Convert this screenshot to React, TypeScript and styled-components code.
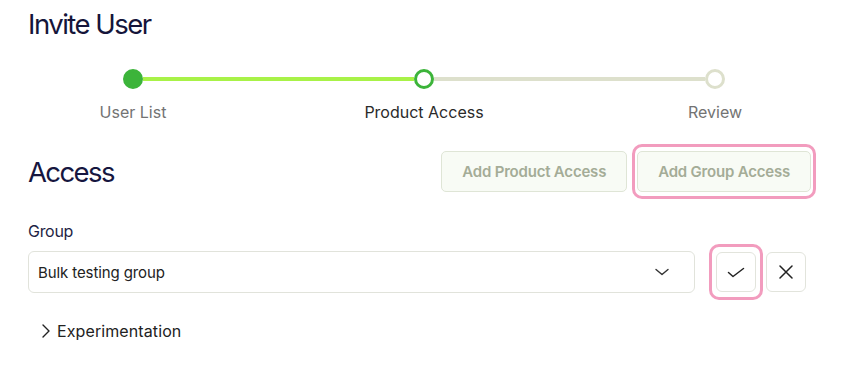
import React from "react";
import styled, { createGlobalStyle } from "styled-components";

const GlobalStyle = createGlobalStyle`
  html, body {
    margin: 0;
    padding: 0;
    background: #ffffff;
    font-family: Inter, "Noto Sans", "Liberation Sans", sans-serif;
  }
  * { box-sizing: border-box; }
`;

const Page = styled.div`
  padding: 7px 0 0 28px;
  width: 811px;
`;

const Title = styled.h1`
  margin: 0;
  font-size: 27.5px;
  line-height: 34px;
  font-weight: 400;
  letter-spacing: -1.5px;
  color: #15153a;
`;

const Track = styled.div`
  display: flex;
  align-items: center;
  margin-top: 28px;
  padding-left: 95px;
  height: 20px;
`;

const Dot = styled.span<{ $state: "done" | "current" | "todo" }>`
  width: 20px;
  height: 20px;
  border-radius: 50%;
  flex: 0 0 20px;
  background: ${(p) => (p.$state === "done" ? "#3cb43a" : "#ffffff")};
  border: 3px solid
    ${(p) => (p.$state === "todo" ? "#dde0cc" : "#3cb43a")};
`;

const Connector = styled.span<{ $done?: boolean }>`
  width: 271px;
  height: 4px;
  flex: 0 0 271px;
  background: ${(p) => (p.$done ? "#a8f248" : "#dde0cc")};
`;

const Labels = styled.div`
  display: grid;
  grid-template-columns: repeat(3, 200px);
  column-gap: 91px;
  margin-left: 5px;
  margin-top: 13px;
`;

const StepLabel = styled.span<{ $active?: boolean }>`
  text-align: center;
  font-size: 16px;
  line-height: 20px;
  letter-spacing: 0px;
  color: ${(p) => (p.$active ? "#2a2a2a" : "#737373")};
`;

const HeaderRow = styled.div`
  display: flex;
  align-items: center;
  justify-content: space-between;
  margin-top: 21px;
  height: 56px;
`;

const SectionTitle = styled.h2`
  margin: 0;
  font-size: 27.5px;
  line-height: 34px;
  font-weight: 400;
  letter-spacing: -1.6px;
  color: #16163f;
  padding-top: 2px;
`;

const Actions = styled.div`
  display: flex;
  align-items: center;
  gap: 10px;
`;

const GhostButton = styled.button`
  height: 41px;
  padding: 0 20px;
  border: 1px solid #dfe5d6;
  border-radius: 5px;
  background: #f8fbf5;
  color: #a4ac97;
  font-family: inherit;
  font-size: 15px;
  font-weight: 600;
  letter-spacing: -0.2px;
  cursor: not-allowed;
`;

const FocusRing = styled.span<{ $padY: number; $padX: number }>`
  display: inline-flex;
  border: 3px solid #f29cbe;
  border-radius: 10px;
  padding: ${(p) => `${p.$padY}px ${p.$padX}px`};
  margin: ${(p) => `-${p.$padY + 3}px -${p.$padX + 3}px`};
`;

const FieldLabel = styled.div`
  margin-top: 22px;
  font-size: 16px;
  line-height: 20px;
  letter-spacing: -0.3px;
  color: #1f1f45;
`;

const FieldRow = styled.div`
  display: flex;
  align-items: center;
  margin-top: 10px;
`;

const Select = styled.div`
  flex: 0 0 667px;
  height: 42px;
  display: flex;
  align-items: center;
  justify-content: space-between;
  padding: 0 25px 0 9px;
  border: 1px solid #e1e3db;
  border-radius: 6px;
  font-size: 15px;
  letter-spacing: -0.1px;
  color: #222222;
`;

const IconButtons = styled.div`
  display: flex;
  align-items: center;
  gap: 10px;
  margin-left: 21px;
`;

const IconButton = styled.button`
  width: 40px;
  height: 40px;
  display: flex;
  align-items: center;
  justify-content: center;
  padding: 0;
  border: 1px solid #e2e4dc;
  border-radius: 6px;
  background: #ffffff;
  color: #222222;
`;

const Collapsible = styled.div`
  display: flex;
  align-items: center;
  gap: 6px;
  margin-top: 28px;
  padding-left: 13px;
  font-size: 16px;
  line-height: 20px;
  letter-spacing: 0.1px;
  color: #222222;
`;

const ChevronDown = () => (
  <svg width="14" height="8" viewBox="0 0 14 8" fill="none">
    <path d="M1 1.5 L7 6.5 L13 1.5" stroke="#333" strokeWidth="1.4" strokeLinecap="round" strokeLinejoin="round" />
  </svg>
);

const ChevronRight = () => (
  <svg width="10" height="16" viewBox="0 0 10 16" fill="none">
    <path d="M2 2 L8 8 L2 14" stroke="#222" strokeWidth="1.4" strokeLinecap="round" strokeLinejoin="round" />
  </svg>
);

const CheckIcon = () => (
  <svg width="18" height="11" viewBox="0 0 18 11" fill="none">
    <path d="M1.5 5.5 L6 9.5 L16.5 1.5" stroke="#222" strokeWidth="1.5" strokeLinecap="round" strokeLinejoin="round" />
  </svg>
);

const CloseIcon = () => (
  <svg width="14" height="14" viewBox="0 0 14 14" fill="none">
    <path d="M1 1 L13 13 M13 1 L1 13" stroke="#222" strokeWidth="1.5" strokeLinecap="round" />
  </svg>
);

export default function App() {
  return (
    <>
      <GlobalStyle />
      <Page>
        <Title>Invite User</Title>
        <Track>
          <Dot $state="done" />
          <Connector $done />
          <Dot $state="current" />
          <Connector />
          <Dot $state="todo" />
        </Track>
        <Labels>
          <StepLabel>User List</StepLabel>
          <StepLabel $active>Product Access</StepLabel>
          <StepLabel>Review</StepLabel>
        </Labels>
        <HeaderRow>
          <SectionTitle>Access</SectionTitle>
          <Actions>
            <GhostButton>Add Product Access</GhostButton>
            <FocusRing $padY={4} $padX={2}>
              <GhostButton>Add Group Access</GhostButton>
            </FocusRing>
          </Actions>
        </HeaderRow>
        <FieldLabel>Group</FieldLabel>
        <FieldRow>
          <Select>
            <span>Bulk testing group</span>
            <ChevronDown />
          </Select>
          <IconButtons>
            <FocusRing $padY={5} $padX={4}>
              <IconButton aria-label="Confirm">
                <CheckIcon />
              </IconButton>
            </FocusRing>
            <IconButton aria-label="Cancel">
              <CloseIcon />
            </IconButton>
          </IconButtons>
        </FieldRow>
        <Collapsible>
          <ChevronRight />
          <span>Experimentation</span>
        </Collapsible>
      </Page>
    </>
  );
}
